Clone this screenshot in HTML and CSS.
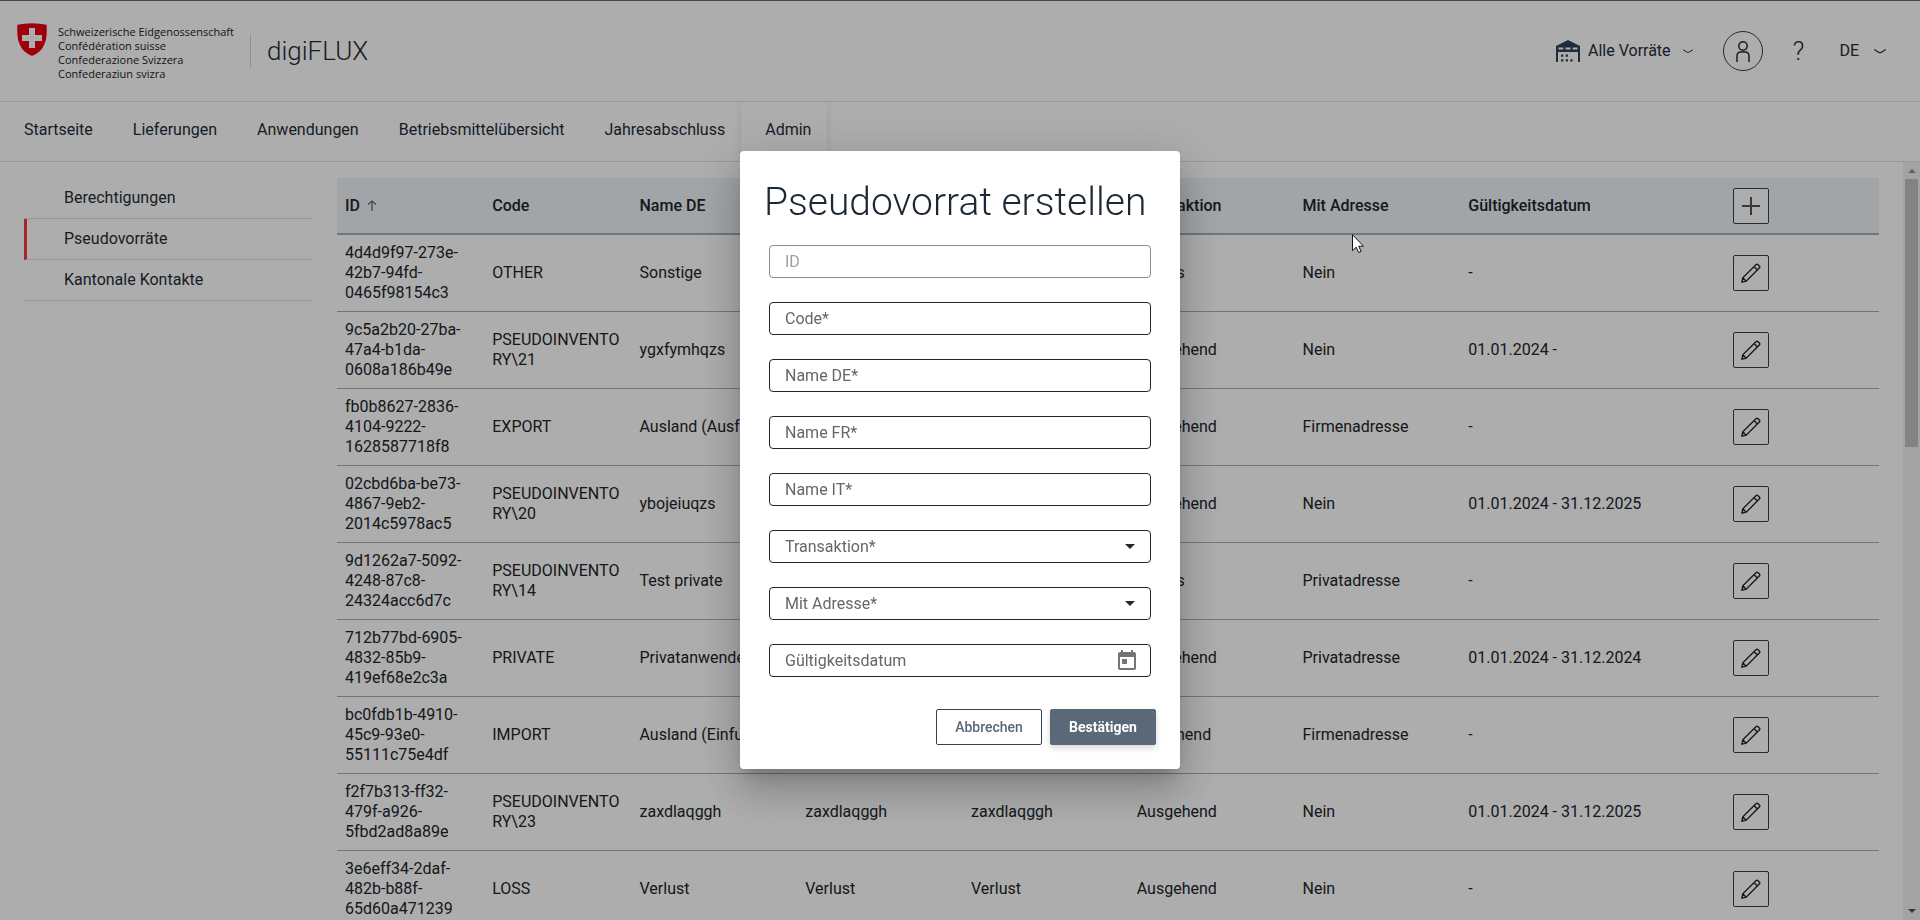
FILE: index.html
```html
<!DOCTYPE html>
<html lang="de">
<head>
<meta charset="utf-8">
<title>digiFLUX</title>
<link rel="stylesheet" href="styles.css">
</head>
<body>
<svg class="defs" aria-hidden="true">
  <symbol id="pencil" viewBox="0 0 20 20">
    <path d="M.9 19.100l.9-4.300L14.900 1.700q1.100-1 2.200 0l1.200 1.200q1 1.100 0 2.200L5.200 18.200zM13 3.600l3.400 3.400M1.800 14.800l3.400 3.400" fill="none" stroke="currentColor" stroke-width="1.400"/>
  </symbol>
  <symbol id="chevron" viewBox="0 0 12 5">
    <path d="M.3.6 5 3.400q1 .6 2 0L11.700.6" fill="none" stroke="currentColor" stroke-width="1.200"/>
  </symbol>
</svg>

<div class="page">
  <header class="header">
    <a class="brand" href="#">
      <svg class="shield" viewBox="0 0 30 33" aria-hidden="true">
        <path fill="#e8000f" d="M.4 1.800Q15-1.200 29.600 1.800C30.500 17 28 27.500 15 33 2 27.500-.5 17 .4 1.800z"/>
        <path fill="#fff" d="M12 5h6v7h7v6h-7v7h-6v-7H5v-6h7z"/>
      </svg>
      <span class="brand-text">
        <span>Schweizerische Eidgenossenschaft</span>
        <span>Confédération suisse</span>
        <span>Confederazione Svizzera</span>
        <span>Confederaziun svizra</span>
      </span>
    </a>
    <span class="app-name">digiFLUX</span>
    <div class="tools">
      <button class="tool stock" type="button">
        <svg class="warehouse" viewBox="0 0 24 22" aria-hidden="true">
          <path fill="currentColor" fill-rule="evenodd" d="M0 6 12 0l12 6V22h-2V12H2v10H0zM2.500 7.500v2h4.800v-2zm7 0v2h5v-2zm7.200 0v2h4.800v-2z"/>
          <path fill="currentColor" d="M5 14.500h2.300v2.300H5zm4.700 0H12v2.300H9.700zM5 19.200h2.300v2.300H5zm4.700 0H12v2.300H9.700zm4.600 0h2.300v2.300h-2.300z"/>
        </svg>
        <span>Alle Vorräte</span>
        <svg class="chevron small" aria-hidden="true"><use href="#chevron"/></svg>
      </button>
      <button class="tool user" type="button" aria-label="Profil">
        <svg class="person" viewBox="0 0 14 21" aria-hidden="true">
          <g fill="none" stroke="currentColor" stroke-width="1.500"><circle cx="7" cy="5" r="4.200"/><path d="M1 21v-6c0-2.500 1.500-4 4-4h4c2.500 0 4 1.500 4 4v6"/></g>
        </svg>
      </button>
      <button class="tool help" type="button">?</button>
      <button class="tool lang" type="button"><span>DE</span>
        <svg class="chevron" aria-hidden="true"><use href="#chevron"/></svg>
      </button>
    </div>
  </header>

  <nav class="nav">
    <a href="#">Startseite</a>
    <a href="#">Lieferungen</a>
    <a href="#">Anwendungen</a>
    <a href="#">Betriebsmittelübersicht</a>
    <a href="#">Jahresabschluss</a>
    <a class="current" href="#">Admin</a>
  </nav>

  <div class="body">
    <nav class="side">
      <a href="#">Berechtigungen</a>
      <a class="active" href="#">Pseudovorräte</a>
      <a href="#">Kantonale Kontakte</a>
    </nav>
    <main class="content">
      <table class="table">
        <colgroup>
          <col class="c-key"><col class="c-key"><col class="c-text"><col class="c-text"><col class="c-text"><col class="c-text"><col class="c-text"><col class="c-date"><col>
        </colgroup>
        <thead>
          <tr>
            <th>ID <svg class="sort" viewBox="0 0 10 11" aria-hidden="true"><path d="M5 11V1M1 4.500 5 1l4 3.500" fill="none" stroke="currentColor" stroke-width="1.300"/></svg></th>
            <th>Code</th><th>Name DE</th><th>Name FR</th><th>Name IT</th><th>Transaktion</th><th>Mit Adresse</th><th>Gültigkeitsdatum</th>
            <th><button class="icon-btn" type="button" aria-label="Hinzufügen"><svg viewBox="0 0 18 18" aria-hidden="true"><path d="M0 9h18M9 0v18" stroke="currentColor" stroke-width="2"/></svg></button></th>
          </tr>
        </thead>
        <tbody>
          <tr><td>4d4d9f97-273e-42b7-94fd-0465f98154c3</td><td>OTHER</td><td>Sonstige</td><td>Autres</td><td>Altro</td><td>Beides</td><td>Nein</td><td>-</td><td><button class="icon-btn" type="button" aria-label="Bearbeiten"><svg aria-hidden="true"><use href="#pencil"/></svg></button></td></tr>
          <tr><td>9c5a2b20-27ba-47a4-b1da-0608a186b49e</td><td>PSEUDOINVENTORY\21</td><td>ygxfymhqzs</td><td>ygxfymhqzs</td><td>ygxfymhqzs</td><td>Ausgehend</td><td>Nein</td><td>01.01.2024 -</td><td><button class="icon-btn" type="button" aria-label="Bearbeiten"><svg aria-hidden="true"><use href="#pencil"/></svg></button></td></tr>
          <tr><td>fb0b8627-2836-4104-9222-1628587718f8</td><td>EXPORT</td><td>Ausland (Ausfuhr)</td><td>Étranger</td><td>Estero</td><td>Ausgehend</td><td>Firmenadresse</td><td>-</td><td><button class="icon-btn" type="button" aria-label="Bearbeiten"><svg aria-hidden="true"><use href="#pencil"/></svg></button></td></tr>
          <tr><td>02cbd6ba-be73-4867-9eb2-2014c5978ac5</td><td>PSEUDOINVENTORY\20</td><td>ybojeiuqzs</td><td>ybojeiuqzs</td><td>ybojeiuqzs</td><td>Ausgehend</td><td>Nein</td><td>01.01.2024 - 31.12.2025</td><td><button class="icon-btn" type="button" aria-label="Bearbeiten"><svg aria-hidden="true"><use href="#pencil"/></svg></button></td></tr>
          <tr><td>9d1262a7-5092-4248-87c8-24324acc6d7c</td><td>PSEUDOINVENTORY\14</td><td>Test private</td><td>Test private</td><td>Test private</td><td>Beides</td><td>Privatadresse</td><td>-</td><td><button class="icon-btn" type="button" aria-label="Bearbeiten"><svg aria-hidden="true"><use href="#pencil"/></svg></button></td></tr>
          <tr><td>712b77bd-6905-4832-85b9-419ef68e2c3a</td><td>PRIVATE</td><td>Privatanwender</td><td>Privé</td><td>Privato</td><td>Ausgehend</td><td>Privatadresse</td><td>01.01.2024 - 31.12.2024</td><td><button class="icon-btn" type="button" aria-label="Bearbeiten"><svg aria-hidden="true"><use href="#pencil"/></svg></button></td></tr>
          <tr><td>bc0fdb1b-4910-45c9-93e0-55111c75e4df</td><td>IMPORT</td><td>Ausland (Einfuhr)</td><td>Étranger</td><td>Estero</td><td>Eingehend</td><td>Firmenadresse</td><td>-</td><td><button class="icon-btn" type="button" aria-label="Bearbeiten"><svg aria-hidden="true"><use href="#pencil"/></svg></button></td></tr>
          <tr><td>f2f7b313-ff32-479f-a926-5fbd2ad8a89e</td><td>PSEUDOINVENTORY\23</td><td>zaxdlaqggh</td><td>zaxdlaqggh</td><td>zaxdlaqggh</td><td>Ausgehend</td><td>Nein</td><td>01.01.2024 - 31.12.2025</td><td><button class="icon-btn" type="button" aria-label="Bearbeiten"><svg aria-hidden="true"><use href="#pencil"/></svg></button></td></tr>
          <tr><td>3e6eff34-2daf-482b-b88f-65d60a471239</td><td>LOSS</td><td>Verlust</td><td>Verlust</td><td>Verlust</td><td>Ausgehend</td><td>Nein</td><td>-</td><td><button class="icon-btn" type="button" aria-label="Bearbeiten"><svg aria-hidden="true"><use href="#pencil"/></svg></button></td></tr>
        </tbody>
      </table>
    </main>
    <div class="scrollbar" aria-hidden="true">
      <span class="arrow up"></span>
      <span class="track"><span class="thumb"></span></span>
      <span class="arrow down"></span>
    </div>
  </div>
</div>

<div class="backdrop">
  <form class="dialog" role="dialog" aria-labelledby="dialog-title">
    <h1 id="dialog-title">Pseudovorrat erstellen</h1>
    <div class="fields">
      <div class="field disabled"><input id="f-id" type="text" disabled><label for="f-id">ID</label></div>
      <div class="field"><input id="f-code" type="text"><label for="f-code">Code*</label></div>
      <div class="field"><input id="f-de" type="text"><label for="f-de">Name DE*</label></div>
      <div class="field"><input id="f-fr" type="text"><label for="f-fr">Name FR*</label></div>
      <div class="field"><input id="f-it" type="text"><label for="f-it">Name IT*</label></div>
      <div class="field"><select id="f-trans"><option></option></select><label for="f-trans">Transaktion*</label><span class="caret"></span></div>
      <div class="field"><select id="f-addr"><option></option></select><label for="f-addr">Mit Adresse*</label><span class="caret"></span></div>
      <div class="field"><input id="f-date" type="text"><label for="f-date">Gültigkeitsdatum</label>
        <button class="calendar" type="button" aria-label="Kalender öffnen"><svg viewBox="0 0 24 24" aria-hidden="true"><path fill="currentColor" d="M19 3h-1V1h-2v2H8V1H6v2H5c-1.110 0-1.990.9-1.990 2L3 19c0 1.100.89 2 2 2h14c1.100 0 2-.9 2-2V5c0-1.100-.9-2-2-2zm0 16H5V8h14v11zM7 10h5v5H7z"/></svg></button>
      </div>
    </div>
    <div class="actions">
      <button class="btn" type="button">Abbrechen</button>
      <button class="btn primary" type="button">Bestätigen</button>
    </div>
  </form>
</div>
<svg class="cursor" viewBox="0 0 12 19" aria-hidden="true"><path d="M.5.700v16l3.700-3.500 2.500 5.300 2.400-1.100-2.400-5.200h4.800z" fill="#fff" stroke="#101020"/></svg>
</body>
</html>
```
FILE: styles.css
```css
* { box-sizing: border-box; }

body {
  margin: 0;
  font: 400 16px/20px Roboto, sans-serif;
  color: #1f2d3a;
  background: #fff;
  overflow: hidden;
}

button { font: inherit; color: inherit; cursor: pointer; }
a { color: inherit; text-decoration: none; }
.defs { display: none; }

.page {
  display: flex;
  flex-direction: column;
  height: 100vh;
  border-top: 1px solid #666;
}

/* Header */
.header {
  flex: none;
  display: flex;
  align-items: center;
  height: 101px;
  padding: 0 34px 0 17px;
  border-bottom: 1px solid #e1e2e4;
}
.brand {
  display: flex;
  gap: 11px;
  padding-right: 16px;
}
.shield { width: 30px; height: 33px; margin-top: 1px; }
.brand-text {
  display: flex;
  flex-direction: column;
  padding-top: 3px;
  font: 11px/14px "Open Sans", sans-serif;
  color: #222;
}
.app-name {
  padding-left: 16px;
  border-left: 1px solid #d8d8da;
  font-size: 26px;
  font-weight: 300;
  line-height: 34px;
}
.tools {
  display: flex;
  align-items: center;
  margin-left: auto;
}
.tool {
  display: flex;
  align-items: center;
  padding: 0;
  border: 0;
  background: none;
}
.warehouse { width: 24px; height: 22px; margin-right: 8px; color: #2f4356; }
.chevron { width: 12px; height: 5px; margin-left: 15px; }
.chevron.small { width: 10px; margin-left: 12px; }
.user {
  justify-content: center;
  width: 40px;
  height: 40px;
  margin-left: 30px;
  border: 1px solid #2f4356;
  border-radius: 50%;
}
.person { width: 14px; height: 21px; }
.help { margin-left: 30px; font-size: 26px; font-weight: 300; }
.lang { margin-left: 35px; }

/* Main navigation */
.nav {
  flex: none;
  display: flex;
  height: 60px;
  border-bottom: 1px solid #e1e2e4;
}
.nav a {
  display: flex;
  align-items: center;
  padding: 0 16px 4px 24px;
}
.nav .current { box-shadow: 0 0 8px rgba(0, 0, 0, .1); clip-path: inset(0 -8px 0 -8px); }

/* Body */
.body {
  flex: 1;
  min-height: 0;
  display: flex;
}
.side {
  flex: none;
  width: 289px;
  margin: 16px 24px 0;
}
.side a {
  display: block;
  padding: 10px 0 10px 40px;
  border-bottom: 1px solid #dcdee1;
}
.side .active { padding-left: 37px; border-left: 3px solid #f5383f; }
.content {
  flex: 1;
  min-width: 0;
  padding: 16px 24px 0 0;
  overflow: hidden;
}

.table {
  width: 100%;
  table-layout: fixed;
  border-collapse: separate;
  border-spacing: 0;
  color: #212529;
}
.c-key { width: 9.55%; }
.c-text { width: 10.75%; }
.c-date { width: 17.2%; }
.table th {
  height: 57px;
  padding: 8px;
  text-align: left;
  font-weight: 500;
  background: #edf4f8;
  border-bottom: 2px solid #a7adb6;
}
.table td {
  height: 77px;
  padding: 8px;
  overflow-wrap: anywhere;
  border-bottom: 1px solid #a7adb6;
}
.sort { width: 10px; height: 11px; margin-left: 3px; color: #666; }
.icon-btn {
  display: flex;
  align-items: center;
  justify-content: center;
  width: 36px;
  height: 36px;
  padding: 0;
  background: #fff;
  border: 1px solid #2f4356;
  border-radius: 2px;
}
.icon-btn svg { width: 20px; height: 20px; }
.table th .icon-btn svg { width: 18px; height: 18px; color: #4a5560; }

.scrollbar {
  flex: none;
  display: flex;
  flex-direction: column;
  align-items: center;
  gap: 6px;
  width: 17px;
  padding: 7px 0;
  background: #f1f1f1;
}
.arrow { border: 4px solid transparent; border-top: 0; border-bottom-color: #909090; }
.arrow.down { border-top: 4px solid #505050; border-bottom: 0; }
.track { flex: 1; width: 13px; }
.thumb { display: block; height: 37%; background: #c1c1c1; }

/* Dialog */
.backdrop {
  position: fixed;
  inset: 0;
  display: flex;
  align-items: center;
  justify-content: center;
  background: rgba(0, 0, 0, .32);
}
.dialog {
  width: 440px;
  padding: 24px;
  background: #fff;
  border-radius: 4px;
  box-shadow: 0 11px 15px -7px rgba(0, 0, 0, .2), 0 24px 38px 3px rgba(0, 0, 0, .14), 0 9px 46px 8px rgba(0, 0, 0, .12);
}
.dialog h1 {
  margin: 0;
  font-size: 39px;
  line-height: 54px;
  font-weight: 300;
  color: #1c2834;
  white-space: nowrap;
}
.fields {
  display: grid;
  gap: 24px;
  padding: 16px 5px 0;
}
.field {
  display: grid;
  align-items: center;
  color: #1c2834;
}
.field > * { grid-area: 1 / 1; }
.field input, .field select {
  width: 100%;
  height: 33px;
  padding: 0 15px;
  font: inherit;
  color: inherit;
  background: #fff;
  border: 1px solid #1c2834;
  border-radius: 4px;
  appearance: none;
}
.field label { padding-left: 16px; color: #666; pointer-events: none; }
.field.disabled input { border-color: #848e99; }
.field.disabled label { color: #9e9e9e; }
.caret {
  justify-self: end;
  margin-right: 16px;
  border: 5px solid transparent;
  border-top-color: #1c2834;
  border-bottom: 0;
  pointer-events: none;
}
.calendar {
  justify-self: end;
  width: 24px;
  height: 24px;
  margin-right: 12px;
  padding: 0;
  border: 0;
  background: none;
  color: #757575;
}
.calendar svg { display: block; }
.actions {
  display: flex;
  justify-content: flex-end;
  gap: 8px;
  padding-top: 32px;
}
.btn {
  width: 106px;
  height: 36px;
  padding: 0;
  font-size: 14px;
  font-weight: 500;
  color: #5a6878;
  background: #fff;
  border: 1px solid #2f4356;
  border-radius: 2px;
}
.btn.primary {
  font-weight: 700;
  color: #fff;
  background: #5a6878;
  border-color: #5a6878;
  box-shadow: 0 3px 6px rgba(0, 0, 0, .16);
}

/* Pointer shown over the page */
.cursor {
  position: fixed;
  left: 1352px;
  top: 234px;
  width: 12px;
  height: 19px;
}
```
